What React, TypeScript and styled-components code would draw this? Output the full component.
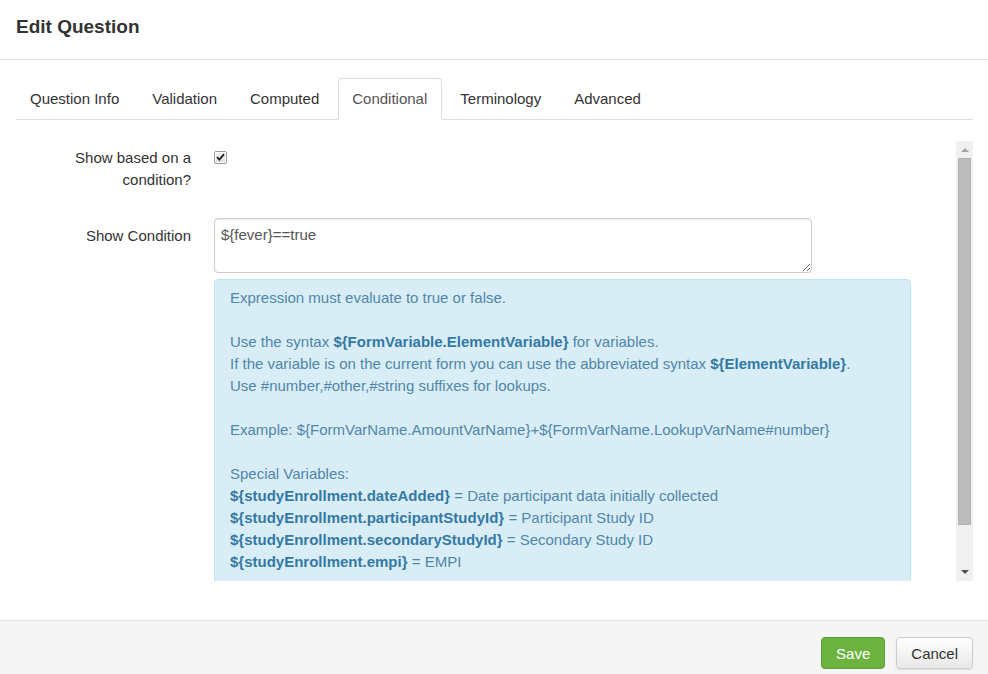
import React from "react";
import styled, { createGlobalStyle } from "styled-components";

const GlobalStyle = createGlobalStyle`
  html, body {
    margin: 0;
    padding: 0;
    background: #fff;
  }
  body {
    font-family: "Liberation Sans", Arial, sans-serif;
    font-size: 15px;
    color: #333;
  }
  * {
    box-sizing: border-box;
  }
`;

const Modal = styled.div`
  width: 988px;
  height: 674px;
  display: flex;
  flex-direction: column;
  overflow: hidden;
`;

const Header = styled.div`
  padding: 15px 16px 20px;
  border-bottom: 1px solid #e5e5e5;
`;

const Title = styled.h4`
  margin: 0;
  font-size: 19px;
  font-weight: bold;
  line-height: 24px;
  color: #333;
`;

const Body = styled.div`
  flex: 1;
  padding: 18px 15px 0 16px;
  display: flex;
  flex-direction: column;
`;

const Tabs = styled.ul`
  display: flex;
  list-style: none;
  margin: 0;
  padding: 0;
  border-bottom: 1px solid #ddd;
`;

const Tab = styled.li<{ $active?: boolean }>`
  margin: 0 4px -1px 0;
  padding: 10px 14px 10px 13px;
  line-height: 20px;
  border: 1px solid ${(p) => (p.$active ? "#ddd" : "transparent")};
  border-bottom-color: ${(p) => (p.$active ? "#fff" : "transparent")};
  border-radius: 4px 4px 0 0;
  background: ${(p) => (p.$active ? "#fff" : "transparent")};
  color: ${(p) => (p.$active ? "#555" : "#333")};
  cursor: pointer;
`;

const ScrollArea = styled.div`
  margin-top: 21px;
  height: 440px;
  display: flex;
`;

const Content = styled.div`
  flex: 1;
  overflow: hidden;
  padding-top: 6px;
`;

const ScrollBar = styled.div`
  width: 17px;
  flex: none;
  display: flex;
  flex-direction: column;
  background: #f0f0f0;
`;

const ArrowButton = styled.div`
  height: 17px;
  flex: none;
  display: flex;
  align-items: center;
  justify-content: center;
`;

const Track = styled.div`
  flex: 1;
  padding: 0 2px;
`;

const Thumb = styled.div`
  height: 367px;
  background: #bcbcbc;
  border: 1px solid #b3b3b3;
`;

const FormRow = styled.div<{ $gap?: number }>`
  display: grid;
  grid-template-columns: 175px 1fr;
  column-gap: 23px;
  margin-bottom: ${(p) => p.$gap ?? 15}px;
`;

const Label = styled.label<{ $top?: number }>`
  text-align: right;
  line-height: 22px;
  color: #333;
  padding-top: ${(p) => p.$top ?? 0}px;
`;

const CheckBox = styled.span`
  display: inline-flex;
  align-items: center;
  justify-content: center;
  width: 13px;
  height: 13px;
  margin-top: 3px;
  border: 1px solid #9a9a9a;
  border-radius: 2px;
  background: linear-gradient(#f4f4f4, #dcdcdc);
  box-shadow: inset 0 0 0 1px #fff;
`;

const TextArea = styled.textarea`
  display: block;
  width: 598px;
  height: 55px;
  padding: 6px;
  border: 1px solid #ccc;
  border-radius: 4px;
  font-family: "Liberation Sans", Arial, sans-serif;
  font-size: 15px;
  line-height: 20px;
  color: #555;
  box-shadow: inset 0 1px 1px rgba(0, 0, 0, 0.075);
  outline: none;
`;

const InfoBox = styled.div`
  width: 697px;
  margin-top: 6px;
  padding: 7px 15px 15px;
  background: #d9edf7;
  border: 1px solid #bce8f1;
  border-radius: 4px;
  color: #4f87a8;
  line-height: 22px;
`;

const Line = styled.div`
  min-height: 22px;
  white-space: nowrap;
`;

const Var = styled.b`
  color: #3479a3;
`;

const Footer = styled.div`
  height: 54px;
  flex: none;
  display: flex;
  justify-content: flex-end;
  align-items: flex-start;
  gap: 11px;
  padding: 16px 15px 0;
  border-top: 1px solid #e5e5e5;
  background: #f5f5f5;
  margin-top: 39px;
`;

const Button = styled.button<{ $primary?: boolean }>`
  height: 32px;
  padding: 0 14px;
  font-family: "Liberation Sans", Arial, sans-serif;
  font-size: 15px;
  border-radius: 4px;
  cursor: pointer;
  color: ${(p) => (p.$primary ? "#fff" : "#333")};
  border: 1px solid ${(p) => (p.$primary ? "#5d9f33" : "#ccc")};
  background: ${(p) =>
    p.$primary ? "#6cb33f" : "linear-gradient(#ffffff, #e8e8e8)"};
  box-shadow: ${(p) => (p.$primary ? "none" : "0 1px 2px rgba(0,0,0,0.1)")};
`;

const tabs = ["Question Info", "Validation", "Computed", "Conditional", "Terminology", "Advanced"];

const Arrow = ({ up, color }: { up?: boolean; color: string }) => (
  <svg width="8" height="5" viewBox="0 0 8 5">
    <path d={up ? "M0 5 L4 1 L8 5 Z" : "M0 0 L4 4 L8 0 Z"} fill={color} />
  </svg>
);

export default function App() {
  return (
    <>
      <GlobalStyle />
      <Modal>
        <Header>
          <Title>Edit Question</Title>
        </Header>
        <Body>
          <Tabs>
            {tabs.map((t) => (
              <Tab key={t} $active={t === "Conditional"}>
                {t}
              </Tab>
            ))}
          </Tabs>
          <ScrollArea>
            <Content>
              <FormRow $gap={27}>
                <Label>Show based on a condition?</Label>
                <div>
                  <CheckBox>
                    <svg width="9" height="8" viewBox="0 0 9 8">
                      <path d="M1 4.2 L3.4 6.6 L8 1.2" fill="none" stroke="#222" strokeWidth="1.8" />
                    </svg>
                  </CheckBox>
                </div>
              </FormRow>
              <FormRow $gap={0}>
                <Label $top={7}>Show Condition</Label>
                <div>
                  <TextArea defaultValue="${fever}==true" />
                  <InfoBox>
                    <Line>Expression must evaluate to true or false.</Line>
                    <Line />
                    <Line>
                      Use the syntax <Var>{"${FormVariable.ElementVariable}"}</Var> for variables.
                    </Line>
                    <Line>
                      If the variable is on the current form you can use the abbreviated syntax{" "}
                      <Var>{"${ElementVariable}"}</Var>.
                    </Line>
                    <Line>Use #number,#other,#string suffixes for lookups.</Line>
                    <Line />
                    <Line>{"Example: ${FormVarName.AmountVarName}+${FormVarName.LookupVarName#number}"}</Line>
                    <Line />
                    <Line>Special Variables:</Line>
                    <Line>
                      <Var>{"${studyEnrollment.dateAdded}"}</Var> = Date participant data initially collected
                    </Line>
                    <Line>
                      <Var>{"${studyEnrollment.participantStudyId}"}</Var> = Participant Study ID
                    </Line>
                    <Line>
                      <Var>{"${studyEnrollment.secondaryStudyId}"}</Var> = Secondary Study ID
                    </Line>
                    <Line>
                      <Var>{"${studyEnrollment.empi}"}</Var> = EMPI
                    </Line>
                  </InfoBox>
                </div>
              </FormRow>
            </Content>
            <ScrollBar>
              <ArrowButton>
                <Arrow up color="#a3a3a3" />
              </ArrowButton>
              <Track>
                <Thumb />
              </Track>
              <ArrowButton>
                <Arrow color="#505050" />
              </ArrowButton>
            </ScrollBar>
          </ScrollArea>
        </Body>
        <Footer>
          <Button $primary>Save</Button>
          <Button>Cancel</Button>
        </Footer>
      </Modal>
    </>
  );
}
